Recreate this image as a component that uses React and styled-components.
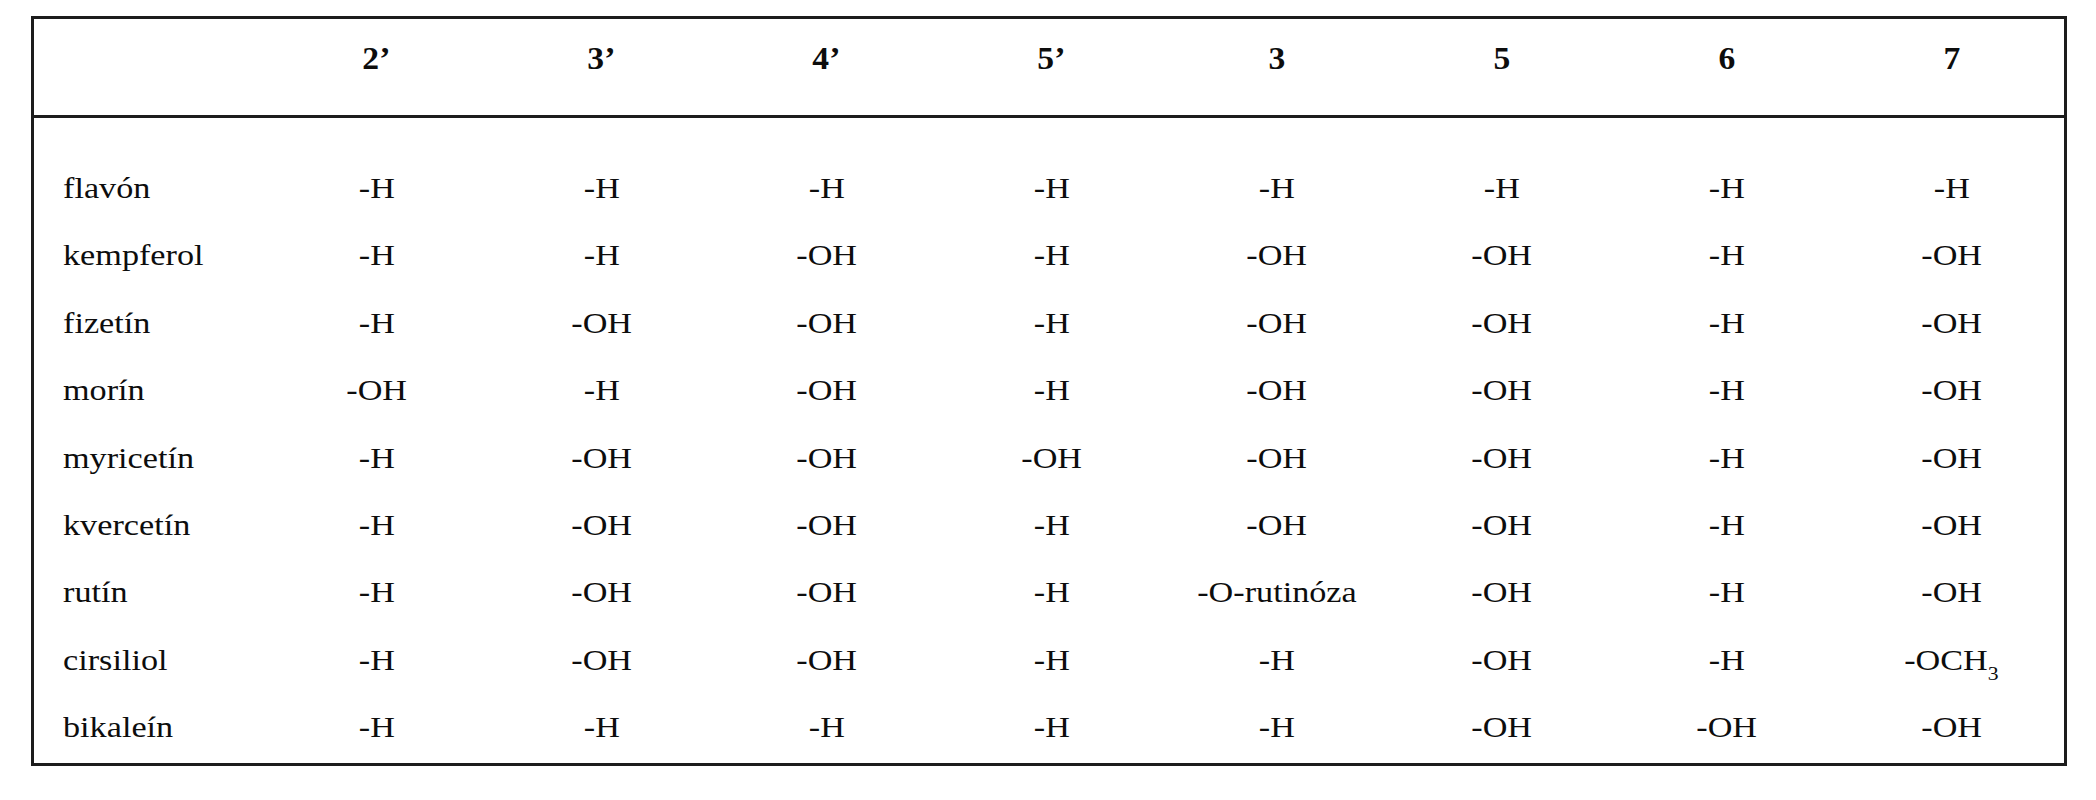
import styled, { createGlobalStyle } from 'styled-components';

const GlobalStyle = createGlobalStyle`
  html, body {
    margin: 0;
    padding: 0;
    background: #ffffff;
  }
  body {
    font-family: 'Liberation Serif', 'Times New Roman', serif;
    color: #0d0d0d;
  }
`;

const columns = ['2’', '3’', '4’', '5’', '3', '5', '6', '7'];

const rows = [
  { name: 'flavón', values: ['-H', '-H', '-H', '-H', '-H', '-H', '-H', '-H'] },
  { name: 'kempferol', values: ['-H', '-H', '-OH', '-H', '-OH', '-OH', '-H', '-OH'] },
  { name: 'fizetín', values: ['-H', '-OH', '-OH', '-H', '-OH', '-OH', '-H', '-OH'] },
  { name: 'morín', values: ['-OH', '-H', '-OH', '-H', '-OH', '-OH', '-H', '-OH'] },
  { name: 'myricetín', values: ['-H', '-OH', '-OH', '-OH', '-OH', '-OH', '-H', '-OH'] },
  { name: 'kvercetín', values: ['-H', '-OH', '-OH', '-H', '-OH', '-OH', '-H', '-OH'] },
  { name: 'rutín', values: ['-H', '-OH', '-OH', '-H', '-O-rutinóza', '-OH', '-H', '-OH'] },
  { name: 'cirsiliol', values: ['-H', '-OH', '-OH', '-H', '-H', '-OH', '-H', 'OCH3'] },
  { name: 'bikaleín', values: ['-H', '-H', '-H', '-H', '-H', '-OH', '-OH', '-OH'] },
];

const renderValue = (value) => {
  if (value === 'OCH3') {
    return (
      <>
        -OCH<Sub>3</Sub>
      </>
    );
  }
  return value;
};

const App = () => {
  return (
    <>
      <GlobalStyle />
      <Page>
        <Table>
          <HeaderRow>
            <HeadCell />
            {columns.map((col) => (
              <HeadCell key={col}>
                <HeadText>{col}</HeadText>
              </HeadCell>
            ))}
          </HeaderRow>
          <Body>
            {rows.map((row) => (
              <Row key={row.name}>
                <NameCell>
                  <Text $origin="left">{row.name}</Text>
                </NameCell>
                {row.values.map((value, i) => (
                  <Cell key={i}>
                    <Text $origin="center">{renderValue(value)}</Text>
                  </Cell>
                ))}
              </Row>
            ))}
          </Body>
        </Table>
      </Page>
    </>
  );
};

export default App;

const Page = styled.div`
  width: 2096px;
  height: 800px;
  padding: 16px 0 0 31px;
  box-sizing: border-box;
`;

const Table = styled.div`
  width: 2036px;
  height: 750px;
  box-sizing: border-box;
  border: 3px solid #1c1c1c;
  display: flex;
  flex-direction: column;
`;

const HeaderRow = styled.div`
  display: grid;
  grid-template-columns: 230px repeat(8, 225px);
  height: 99px;
  box-sizing: border-box;
  padding-top: 22px;
  border-bottom: 3px solid #1c1c1c;
`;

const HeadCell = styled.div`
  text-align: center;
  font-size: 32px;
  font-weight: 700;
  line-height: 34px;
`;

const HeadText = styled.span`
  display: inline-block;
  transform: scaleX(1.05);
`;

const Body = styled.div`
  padding-top: 36px;
  display: flex;
  flex-direction: column;
`;

const Row = styled.div`
  display: grid;
  grid-template-columns: 230px repeat(8, 225px);
  height: 67.4px;
  align-items: center;
`;

const NameCell = styled.div`
  padding-left: 29px;
  font-size: 30px;
  line-height: 67.4px;
  white-space: nowrap;
`;

const Cell = styled.div`
  text-align: center;
  font-size: 30px;
  line-height: 67.4px;
  white-space: nowrap;
`;

const Text = styled.span`
  display: inline-block;
  transform: scaleX(1.14);
  transform-origin: ${(props) => props.$origin} center;
`;

const Sub = styled.sub`
  font-size: 19px;
  vertical-align: -10px;
  line-height: 0;
`;
